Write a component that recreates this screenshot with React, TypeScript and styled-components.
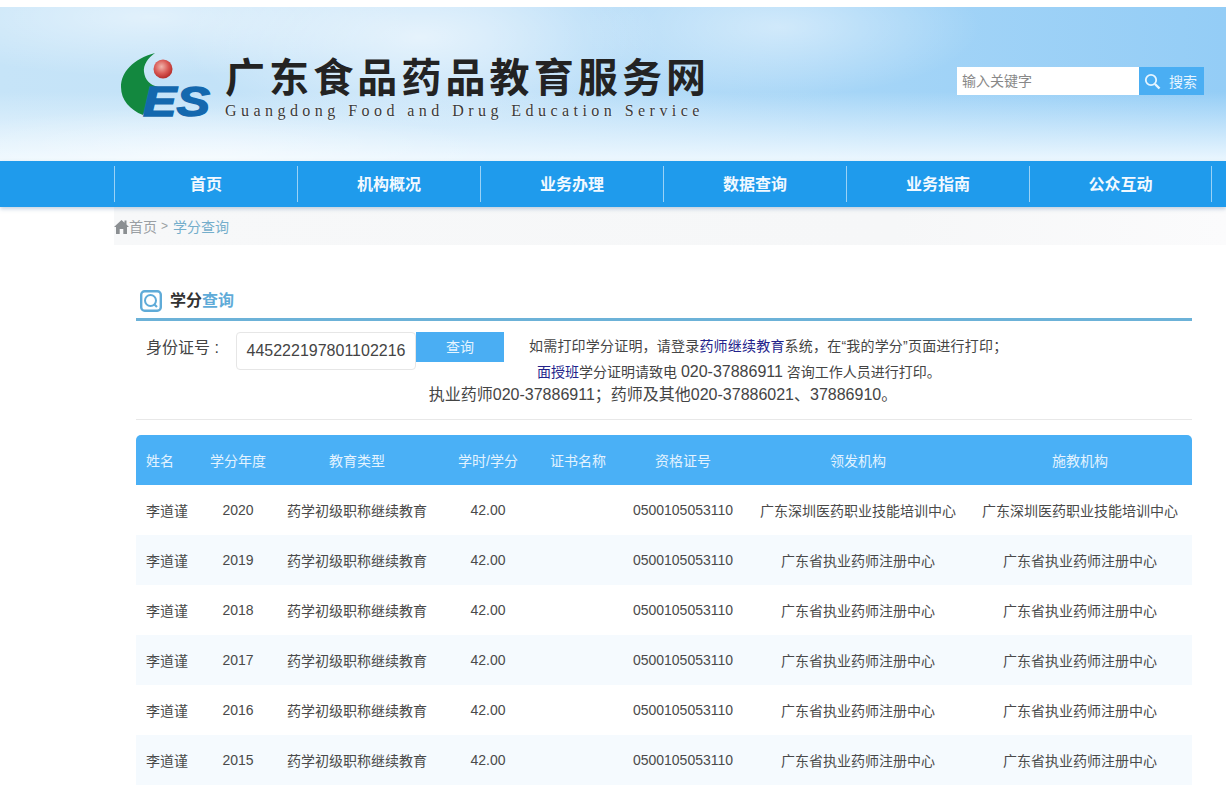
import React from 'react';
import styled, { createGlobalStyle } from 'styled-components';

const GlobalStyle = createGlobalStyle`
  html, body {
    margin: 0;
    padding: 0;
    background: #fff;
  }
  body {
    font-family: "Liberation Sans", "Noto Sans CJK SC", sans-serif;
    color: #333;
    overflow: hidden;
  }
`;

const Page = styled.div`
  width: 1226px;
  height: 797px;
  padding-top: 7px;
  box-sizing: border-box;
  overflow: hidden;
`;

const Banner = styled.header`
  height: 154px;
  box-sizing: border-box;
  padding: 45px 22px 0 121px;
  display: flex;
  align-items: flex-start;
  justify-content: space-between;
  background:
    radial-gradient(ellipse 240px 90px at 420px 30px, rgba(255, 255, 255, 0.6), transparent 100%),
    radial-gradient(ellipse 200px 70px at 780px 20px, rgba(255, 255, 255, 0.45), transparent 100%),
    radial-gradient(ellipse 260px 60px at 150px 10px, rgba(255, 255, 255, 0.5), transparent 100%),
    radial-gradient(ellipse 300px 50px at 200px 150px, rgba(255, 255, 255, 0.5), transparent 100%),
    linear-gradient(180deg, rgba(255, 255, 255, 0) 55%, rgba(240, 249, 255, 0.95) 100%),
    linear-gradient(90deg, #c6e4f8 0%, #bfe0f8 40%, #a5d5f7 70%, #94cdf6 100%);
`;

const Brand = styled.div`
  display: flex;
  align-items: flex-start;
`;

const Logo = styled.svg`
  width: 90px;
  height: 68px;
  flex: none;
  overflow: visible;
`;

const BrandText = styled.div`
  margin: -1px 0 0 14px;
`;

const BrandTitle = styled.div`
  font-family: "Noto Sans CJK SC", sans-serif;
  font-size: 40px;
  line-height: 48px;
  font-weight: 700;
  letter-spacing: 4.1px;
  color: #232323;
  white-space: nowrap;
`;

const BrandSub = styled.div`
  margin-top: 3px;
  font-family: "Liberation Serif", serif;
  font-size: 16px;
  line-height: 18px;
  letter-spacing: 4.45px;
  color: #3a3a3a;
  text-shadow: 0 0 2px #fff;
  white-space: nowrap;
`;

const Search = styled.div`
  display: flex;
  margin-top: 15px;
  height: 28px;
`;

const SearchInput = styled.div`
  width: 177px;
  padding-left: 5px;
  background: #fff;
  font-size: 14px;
  line-height: 28px;
  color: #888;
`;

const SearchButton = styled.div`
  width: 65px;
  box-sizing: border-box;
  padding-left: 5px;
  display: flex;
  align-items: center;
  gap: 8px;
  background: #4aaef3;
  color: #e6f5ff;
  font-size: 14px;
`;

const Nav = styled.nav`
  height: 46px;
  padding-left: 114px;
  display: flex;
  align-items: center;
  background: #1f9bec;
  box-shadow: 0 2px 4px rgba(90, 130, 170, 0.35);
  position: relative;
`;

const NavItem = styled.div<{ $last?: boolean }>`
  width: 183px;
  height: 36px;
  line-height: 38px;
  text-align: center;
  box-sizing: border-box;
  border-left: 1px solid rgba(255, 255, 255, 0.55);
  border-right: ${(p) => (p.$last ? '1px solid rgba(255, 255, 255, 0.55)' : 'none')};
  color: #f2f9ff;
  font-size: 16px;
  font-weight: 700;
`;

const Crumbs = styled.div`
  height: 38px;
  margin-left: 114px;
  display: flex;
  align-items: center;
  font-size: 14px;
  color: #9a9fa3;
  background: linear-gradient(90deg, #f7f8f9 0%, #f6f7f8 70%, #fbfbfc 100%);
`;

const CrumbHere = styled.span`
  color: #74aecb;
`;

const CrumbSep = styled.span`
  margin: 0 5px 0 4px;
  font-size: 12px;
`;

const Main = styled.main`
  width: 1056px;
  margin: 0 0 0 136px;
  padding-top: 43px;
`;

const SectionHead = styled.div`
  height: 28px;
  padding: 2px 0 0 4px;
  display: flex;
  align-items: flex-start;
  gap: 8px;
  border-bottom: 3px solid #6cb2d8;
  font-size: 16px;
  line-height: 22px;
  font-weight: 700;
  color: #333;
`;

const SectionIcon = styled.svg`
  width: 22px;
  height: 22px;
  flex: none;
`;

const Accent = styled.span`
  color: #5fabd8;
`;

const QueryRow = styled.div`
  margin-top: 11px;
  display: flex;
  align-items: flex-start;
`;

const Label = styled.div`
  width: 100px;
  padding-left: 10px;
  box-sizing: border-box;
  font-size: 16px;
  line-height: 32px;
  color: #444;
  white-space: nowrap;
`;

const IdInput = styled.div`
  width: 180px;
  height: 38px;
  box-sizing: border-box;
  border: 1px solid #e6e6e6;
  border-radius: 4px;
  text-align: center;
  font-size: 16px;
  line-height: 36px;
  color: #444;
`;

const QueryButton = styled.div`
  width: 88px;
  height: 30px;
  background: #4aaef3;
  color: #e6f5ff;
  text-align: center;
  font-size: 14px;
  line-height: 30px;
`;

const Notes = styled.div`
  margin-left: 25px;
  padding-top: 5px;
  font-size: 14px;
  color: #444;
`;

const NoteLine = styled.div<{ $indent?: number }>`
  height: ${(p) => (p.$indent ? 18 : 26)}px;
  line-height: 18px;
  padding-left: ${(p) => p.$indent ?? 0}px;
  letter-spacing: ${(p) => (p.$indent ? 0 : 0.2)}px;
  white-space: nowrap;
`;

const NoteLink = styled.span`
  color: #23238b;
`;

const NotePhone = styled.span`
  font-size: 16px;
`;

const Hotline = styled.div`
  margin-top: 4px;
  padding: 0 2px 14px 0;
  text-align: center;
  font-size: 16px;
  line-height: 20px;
  color: #444;
  border-bottom: 1px solid #e8e8e8;
`;

const Table = styled.table`
  width: 1056px;
  margin-top: 15px;
  border-collapse: separate;
  border-spacing: 0;
  table-layout: fixed;
  font-size: 14px;
`;

const HeadCell = styled.th<{ $left?: boolean }>`
  height: 50px;
  padding: 0 0 0 ${(p) => (p.$left ? '10px' : '0')};
  box-sizing: border-box;
  background: #4ab0f6;
  color: #e3f3ff;
  font-weight: 400;
  font-size: 14px;
  text-align: ${(p) => (p.$left ? 'left' : 'center')};
  white-space: nowrap;
  &:first-child {
    border-top-left-radius: 5px;
  }
  &:last-child {
    border-top-right-radius: 5px;
  }
`;

const BodyRow = styled.tr<{ $alt: boolean }>`
  background: ${(p) => (p.$alt ? '#f5fafe' : '#fff')};
`;

const Cell = styled.td<{ $left?: boolean }>`
  height: 50px;
  padding: 0 0 0 ${(p) => (p.$left ? '10px' : '0')};
  text-align: ${(p) => (p.$left ? 'left' : 'center')};
  color: #4a4a4a;
  white-space: nowrap;
`;

const columns = [64, 76, 162, 100, 80, 130, 220, 224];
const heads = ['姓名', '学分年度', '教育类型', '学时/学分', '证书名称', '资格证号', '领发机构', '施教机构'];

const SHENZHEN = '广东深圳医药职业技能培训中心';
const PROVINCE = '广东省执业药师注册中心';

const rows = [
  { year: '2020', org: SHENZHEN },
  { year: '2019', org: PROVINCE },
  { year: '2018', org: PROVINCE },
  { year: '2017', org: PROVINCE },
  { year: '2016', org: PROVINCE },
  { year: '2015', org: PROVINCE },
];

const navItems = ['首页', '机构概况', '业务办理', '数据查询', '业务指南', '公众互动'];

const App = () => (
  <Page>
    <GlobalStyle />
    <Banner>
      <Brand>
        <Logo viewBox="0 0 90 68">
          <defs>
            <radialGradient id="ball" cx="0.42" cy="0.38" r="0.6">
              <stop offset="0" stopColor="#f0b5ac" />
              <stop offset="0.6" stopColor="#d95a55" />
              <stop offset="1" stopColor="#b8312f" />
            </radialGradient>
          </defs>
          <path d="M34 1 C12 7 0 20 0 35 C0 48 9 58 22 63 L37 35 C29 33 24 28 23 20 C22 13 27 6 34 1 Z" fill="#13883f" />
          <circle cx="42" cy="17" r="9.5" fill="url(#ball)" />
          <text
            x="22"
            y="64"
            fontFamily="Liberation Sans, sans-serif"
            fontStyle="italic"
            fontWeight="700"
            fontSize="43"
            fill="#1468ae"
            stroke="#1468ae"
            strokeWidth="1.4"
            textLength="67"
            lengthAdjust="spacingAndGlyphs"
          >
            ES
          </text>
        </Logo>
        <BrandText>
          <BrandTitle>广东食品药品教育服务网</BrandTitle>
          <BrandSub>Guangdong Food and Drug Education Service</BrandSub>
        </BrandText>
      </Brand>
      <Search>
        <SearchInput>输入关键字</SearchInput>
        <SearchButton>
          <svg width="17" height="17" viewBox="0 0 17 17" fill="none" stroke="#e6f5ff">
            <circle cx="7" cy="7" r="5.2" strokeWidth="1.8" />
            <path d="M11 11 L15.5 15.5" strokeWidth="2.4" />
          </svg>
          搜索
        </SearchButton>
      </Search>
    </Banner>
    <Nav>
      {navItems.map((item, i) => (
        <NavItem key={item} $last={i === navItems.length - 1}>
          {item}
        </NavItem>
      ))}
    </Nav>
    <Crumbs>
      <svg width="15" height="15" viewBox="0 0 15 15" fill="#8b8f92">
        <path d="M7.5 1 L10.5 3.8 L10.5 1.5 L12.5 1.5 L12.5 5.6 L15 8 L13 8 L13 15 L9.3 15 L9.3 10 L5.7 10 L5.7 15 L2 15 L2 8 L0 8 Z" />
      </svg>
      首页
      <CrumbSep>&gt;</CrumbSep>
      <CrumbHere>学分查询</CrumbHere>
    </Crumbs>
    <Main>
      <SectionHead>
        <SectionIcon viewBox="0 0 22 22" fill="none" stroke="#5fabd8">
          <rect x="1.2" y="1.2" width="19.6" height="19.6" rx="3.5" strokeWidth="2.4" />
          <circle cx="10.5" cy="10.5" r="5.5" strokeWidth="2" />
          <path d="M14.5 14.5 L17 17" strokeWidth="2.2" />
        </SectionIcon>
        <div>
          学分<Accent>查询</Accent>
        </div>
      </SectionHead>
      <QueryRow>
        <Label>身份证号&nbsp;:</Label>
        <IdInput>445222197801102216</IdInput>
        <QueryButton>查询</QueryButton>
        <Notes>
          <NoteLine>
            如需打印学分证明，请登录<NoteLink>药师继续教育</NoteLink>系统，在“我的学分”页面进行打印；
          </NoteLine>
          <NoteLine $indent={8}>
            <NoteLink>面授班</NoteLink>学分证明请致电 <NotePhone>020-37886911</NotePhone> 咨询工作人员进行打印。
          </NoteLine>
        </Notes>
      </QueryRow>
      <Hotline>执业药师020-37886911；药师及其他020-37886021、37886910。</Hotline>
      <Table>
        <colgroup>
          {columns.map((w, i) => (
            <col key={i} width={w} />
          ))}
        </colgroup>
        <thead>
          <tr>
            {heads.map((h, i) => (
              <HeadCell key={h} $left={i === 0}>
                {h}
              </HeadCell>
            ))}
          </tr>
        </thead>
        <tbody>
          {rows.map((row, i) => (
            <BodyRow key={row.year} $alt={i % 2 === 1}>
              <Cell $left>李道谨</Cell>
              <Cell>{row.year}</Cell>
              <Cell>药学初级职称继续教育</Cell>
              <Cell>42.00</Cell>
              <Cell />
              <Cell>0500105053110</Cell>
              <Cell>{row.org}</Cell>
              <Cell>{row.org}</Cell>
            </BodyRow>
          ))}
        </tbody>
      </Table>
    </Main>
  </Page>
);

export default App;
